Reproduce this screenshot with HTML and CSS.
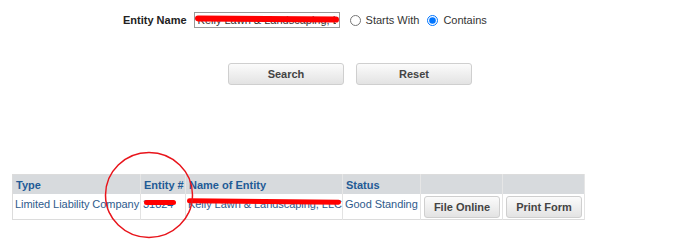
FILE: index.html
```html
<!DOCTYPE html>
<html>
<head>
<meta charset="utf-8">
<link rel="stylesheet" href="styles.css">
</head>
<body>
<div class="page">
  <form class="search">
    <div class="row">
      <label class="lbl" for="en">Entity Name</label>
      <span class="inwrap"><input id="en" class="txt" type="text" value="Kelly Lawn &amp; Landscaping, LLC"><span class="scrib scrib-in"></span></span>
      <label class="opt first"><input type="radio" name="m" class="rad"> Starts With</label>
      <label class="opt second"><input type="radio" name="m" class="rad" checked> Contains</label>
    </div>
    <div class="btns">
      <button type="button" class="btn wide">Search</button>
      <button type="button" class="btn wide">Reset</button>
    </div>
  </form>
  <div class="results">
    <table class="grid">
      <colgroup><col class="c1"><col class="c2"><col class="c3"><col class="c4"><col class="c5"><col class="c6"></colgroup>
      <thead>
        <tr><th>Type</th><th>Entity #</th><th>Name of Entity</th><th>Status</th><th></th><th></th></tr>
      </thead>
      <tbody>
        <tr>
          <td>Limited Liability Company</td>
          <td class="rel"><a class="lnk">31824</a><span class="scrib scrib-num"></span></td>
          <td class="rel">Kelly Lawn &amp; Landscaping, LLC<span class="scrib scrib-name"></span></td>
          <td>Good Standing</td>
          <td class="bc"><button type="button" class="btn full">File Online</button></td>
          <td class="bc"><button type="button" class="btn full">Print Form</button></td>
        </tr>
      </tbody>
    </table>
    <svg class="circle" width="96" height="92" viewBox="0 0 96 92"><ellipse cx="48" cy="46" rx="43.5" ry="42.5" fill="none" stroke="#e8141b" stroke-width="1.5"/></svg>
  </div>
</div>
</body>
</html>
```
FILE: styles.css
```css
* { box-sizing: border-box; }
body { margin: 0; background: #fff; font-family: "Liberation Sans", Arial, sans-serif; font-size: 11px; color: #333; }
.page { width: 700px; height: 251px; overflow: hidden; }
.search { padding-top: 12px; }
.row { display: flex; align-items: center; height: 16px; padding-left: 123px; }
.lbl { font-weight: bold; color: #222; margin-right: 7px; }
.inwrap { position: relative; display: inline-block; height: 16px; }
.txt { display: block; width: 146px; height: 16px; border: 1px solid #999; padding: 0 3px; font: 11px "Liberation Sans", Arial, sans-serif; color: #333; margin: 0; }
.opt { display: flex; align-items: center; color: #333; }
.opt.first { margin-left: 10px; }
.opt.second { margin-left: 8px; }
.rad { margin: 0 5px 0 0; width: 11px; height: 11px; }
.btns { display: flex; justify-content: center; gap: 12px; margin-top: 35px; }
.btn { height: 22px; border: 1px solid #cfcfcf; border-radius: 3px; background: linear-gradient(#fbfbfb, #e3e3e3); font: bold 11px "Liberation Sans", Arial, sans-serif; color: #444; padding: 0 6px; }
.btn.wide { width: 116px; }
.btn.full { width: 100%; display: block; }
.results { position: relative; margin: 89px 0 0 12px; }
.grid { border-collapse: collapse; border: 1px solid #dcdcdc; table-layout: fixed; width: 572px; }
.grid th { background: #d7dadd; color: #1f5b96; font-weight: bold; text-align: left; height: 19px; padding: 1px 2px 0 3px; border-right: 1px solid #e6e6e6; white-space: nowrap; overflow: hidden; }
.grid td { color: #2e5b8c; height: 25px; padding: 4px 2px 0; border-right: 1px solid #e3e3e3; vertical-align: top; white-space: nowrap; overflow: visible; letter-spacing: -0.05px; }
.grid td.bc { padding: 2px 2px 1px 3px; }
.c1 { width: 128px; } .c2 { width: 45px; } .c3 { width: 157px; } .c4 { width: 78px; } .c5 { width: 82px; } .c6 { width: 82px; }
.lnk { color: #1f5b96; }
.rel { position: relative; }
.scrib { position: absolute; height: 5px; background: #f00; border-radius: 3px; }
.scrib-in { left: 1px; right: 1px; top: 4px; height: 6px; transform: rotate(0.5deg); }
.scrib-num { left: 3px; width: 32px; top: 6px; }
.scrib-name { left: 1px; width: 154px; top: 5px; transform: rotate(0.5deg); }
.circle { position: absolute; left: 89px; top: -25px; }
```
